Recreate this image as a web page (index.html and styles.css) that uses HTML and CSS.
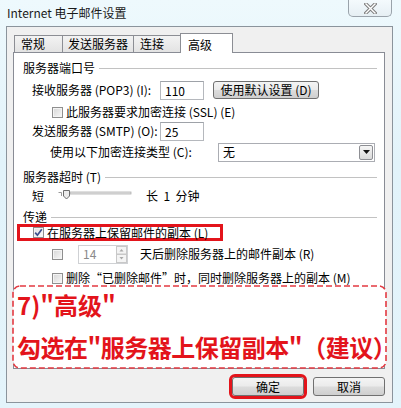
FILE: index.html
```html
<!DOCTYPE html>
<html lang="zh-CN">
<head>
  <meta charset="UTF-8" />
  <title>Internet 电子邮件设置</title>
  <link rel="stylesheet" href="styles.css">
</head>
<body>
  <div class="window">
    <div class="titlebar">
      <span class="title">Internet 电子邮件设置</span>
      <div class="close">
        <svg width="13" height="11" viewBox="0 0 13 11">
          <path d="M2 1 L11 10 M11 1 L2 10" stroke="#7d7d7d" stroke-width="3.4" stroke-linecap="square"/>
          <path d="M2 1 L11 10 M11 1 L2 10" stroke="#ffffff" stroke-width="1.4" stroke-linecap="square"/>
        </svg>
      </div>
    </div>

    <div class="dialog">
      <div class="tabs">
        <div class="tab t1">常规</div>
        <div class="tab t2">发送服务器</div>
        <div class="tab t3">连接</div>
        <div class="tab t4 active">高级</div>
      </div>

      <div class="panel">
        <div class="group g1"><span>服务器端口号</span><i class="rule"></i></div>

        <div class="row r-pop">
          <span class="label">接收服务器 (POP3) (I):</span>
          <span class="field">110</span>
          <span class="btn small">使用默认设置 (D)</span>
        </div>

        <div class="row r-ssl">
          <span class="cb"></span>
          <span>此服务器要求加密连接 (SSL) (E)</span>
        </div>

        <div class="row r-smtp">
          <span class="label">发送服务器 (SMTP) (O):</span>
          <span class="field">25</span>
        </div>

        <div class="row r-enc">
          <span class="label">使用以下加密连接类型 (C):</span>
          <span class="select">
            <span>无</span>
            <span class="drop">
              <svg width="7" height="4" viewBox="0 0 7 4"><path d="M0 0 H7 L3.5 4 Z" fill="#111"/></svg>
            </span>
          </span>
        </div>

        <div class="group g2"><span>服务器超时 (T)</span><i class="rule"></i></div>

        <div class="row r-slider">
          <span>短</span>
          <svg class="slider" width="74" height="12" viewBox="0 0 74 12">
            <path d="M0.5 2.5 H3.5 V6" fill="none" stroke="#9a9a9a"/>
            <rect x="12" y="2" width="61" height="2" fill="#e4e4e4" stroke="#b0b0b0" stroke-width="0.8"/>
            <path d="M5.5 0.5 H11.5 V6 L8.5 9 L5.5 6 Z" fill="#ececec" stroke="#6e6e6e"/>
          </svg>
          <span class="long">长&nbsp;&nbsp;1&nbsp;&nbsp;分钟</span>
        </div>

        <div class="group g3"><span>传递</span><i class="rule"></i></div>

        <div class="row r-keep">
          <span class="cb checked">
            <svg width="9" height="9" viewBox="0 0 9 9"><path d="M1.2 4.6 L3.4 7.2 L7.8 1.2" fill="none" stroke="#3c4f8c" stroke-width="1.7"/></svg>
          </span>
          <span>在服务器上保留邮件的副本 (L)</span>
        </div>

        <div class="row r-days">
          <span class="cb"></span>
          <span class="spin">
            <span>14</span>
            <span class="arrows">
              <svg width="11" height="17" viewBox="0 0 11 17">
                <rect x="0.5" y="0.5" width="10" height="7.5" fill="#f4f4f4" stroke="#c8c8c8"/>
                <rect x="0.5" y="8.5" width="10" height="8" fill="#f4f4f4" stroke="#c8c8c8"/>
                <path d="M3.5 5.5 H7.5 L5.5 3 Z" fill="#a8a8a8"/>
                <path d="M3.5 11 H7.5 L5.5 13.5 Z" fill="#a8a8a8"/>
              </svg>
            </span>
          </span>
          <span class="days-text">天后删除服务器上的邮件副本 (R)</span>
        </div>

        <div class="row r-del">
          <span class="cb"></span>
          <span>删除“已删除邮件”时，同时删除服务器上的副本 (M)</span>
        </div>
      </div>

      <div class="buttons">
        <span class="btn ok">确定</span>
        <span class="btn">取消</span>
      </div>
    </div>

    <!-- tutorial annotation laid over the dialog -->
    <div class="note">
      <svg class="note-border" width="375" height="84" viewBox="0 0 375 84">
        <rect x="1" y="1" width="373" height="82" rx="7" fill="#fff" stroke="#e33a42" stroke-width="1.6" stroke-dasharray="6 3"/>
      </svg>
      <div class="note-l1">7)"高级"</div>
      <div class="note-l2">勾选在"服务器上保留副本"（建议）</div>
    </div>
  </div>
</body>
</html>
```

FILE: styles.css
```css
/* Window frame */
body {
  margin: 0;
  background: #e3f4fb;
  font-family: "Noto Sans CJK SC", "Liberation Sans", sans-serif;
  font-size: 12px;
  color: #000;
}
.window {
  position: relative;
  width: 401px;
  height: 408px;
  overflow: hidden;
  background: linear-gradient(180deg, #eef9fd 0%, #e2f3fa 40%, #e4f4fb 100%);
}
.titlebar {
  height: 26px;
  display: flex;
  align-items: flex-start;
  justify-content: space-between;
  padding: 0 9px 0 7px;
}
.title {
  margin-top: 5px;
  line-height: 16px;
  color: #1a1a1a;
}
.close {
  width: 44px;
  height: 17px;
  box-sizing: border-box;
  border: 1px solid #9aa3ab;
  border-top: none;
  border-radius: 0 0 5px 5px;
  background: linear-gradient(180deg, #f4fafd, #e6eff4);
  display: flex;
  align-items: center;
  justify-content: center;
  padding-top: 1px;
}

/* Dialog body */
.dialog {
  margin-left: 6px;
  width: 387px;
  height: 377px;
  box-sizing: border-box;
  border: 1px solid #8b949c;
  background: #f0f0f0;
  padding: 6px 7px 0 6px;
}
.tabs {
  display: flex;
  align-items: flex-end;
  height: 19px;
  padding-left: 1px;
}
.tab {
  height: 17px;
  box-sizing: border-box;
  border: 1px solid #8c8e94;
  border-bottom: none;
  background: linear-gradient(180deg, #f3f3f3, #e3e3e3);
  padding-left: 6px;
  line-height: 16px;
  margin-left: -1px;
}
.t1 { width: 49px; margin-left: 0; }
.t2 { width: 72px; padding-left: 5px; }
.t3 { width: 48px; }
.t4 { width: 53px; }
.tab.active {
  position: relative;
  z-index: 1;
  height: 20px;
  margin-bottom: -1px;
  background: #fff;
  padding-left: 7px;
  line-height: 22px;
}
.panel {
  width: 372px;
  height: 317px;
  box-sizing: border-box;
  border: 1px solid #898c95;
  background: #fff;
  padding: 0 7px 0 9px;
}

/* Groups and rows */
.group {
  display: flex;
  align-items: center;
  height: 14px;
  line-height: 14px;
}
.rule {
  flex: 1;
  height: 1px;
  background: #c2c2c2;
  margin-left: 4px;
}
.g1 { margin-top: 8px; }
.g2 { margin-top: 8px; }
.g3 { margin-top: 6px; }

.row {
  display: flex;
  align-items: center;
  line-height: 14px;
  white-space: nowrap;
}
.r-pop { height: 20px; margin-top: 5px; padding-left: 9px; }
.r-ssl { height: 16px; margin-top: 4px; padding-left: 29px; }
.r-smtp { height: 20px; margin-top: 1px; padding-left: 9px; }
.r-enc { height: 20px; margin-top: 1px; padding-left: 27px; }
.r-slider { height: 16px; margin-top: 4px; padding-left: 9px; }
.r-keep {
  width: 206px;
  height: 17px;
  box-sizing: border-box;
  margin-left: -6px;
  border: 3px solid #e3141b;
  padding-left: 13px;
}
.r-days { height: 20px; margin-top: 3px; padding-left: 29px; }
.r-del { height: 16px; margin-top: 6px; padding-left: 29px; }

.r-pop .label, .r-smtp .label { width: 128px; }
.r-enc .label { width: 168px; }

.field {
  width: 44px;
  height: 19px;
  box-sizing: border-box;
  border: 1px solid #b5b8bd;
  border-top-color: #9ea2a8;
  padding-left: 4px;
  line-height: 17px;
}
.btn {
  display: inline-flex;
  align-items: center;
  justify-content: center;
  box-sizing: border-box;
  border: 1px solid #707070;
  border-radius: 3px;
  background: linear-gradient(180deg, #f4f4f4 0%, #ebebeb 48%, #dcdcdc 52%, #cfcfcf 100%);
  color: #000;
}
.btn.small {
  width: 106px;
  height: 18px;
  margin-left: 9px;
}
.select {
  display: flex;
  align-items: center;
  justify-content: space-between;
  width: 157px;
  height: 19px;
  box-sizing: border-box;
  border: 1px solid #abadb3;
  padding: 0 1px 0 4px;
}
.drop {
  width: 14px;
  height: 15px;
  box-sizing: border-box;
  border: 1px solid #8e8f94;
  border-radius: 2px;
  background: linear-gradient(180deg, #f6f6f6, #d9d9d9);
  display: flex;
  align-items: center;
  justify-content: center;
}

/* Checkboxes */
.cb {
  width: 11px;
  height: 11px;
  box-sizing: border-box;
  border: 1px solid #8f8f8f;
  background: linear-gradient(135deg, #d6d6d6, #f8f8f8);
  box-shadow: inset 0 0 0 1px #f4f4f4;
  margin-right: 3px;
  flex: none;
  display: flex;
  align-items: center;
  justify-content: center;
}
.cb.checked { background: linear-gradient(135deg, #e2e2e2, #fafafa); }

/* Slider */
.slider { margin-left: 14px; }
.long { margin-left: 14px; }

/* Spin box */
.spin {
  display: flex;
  align-items: center;
  justify-content: space-between;
  width: 50px;
  height: 19px;
  box-sizing: border-box;
  border: 1px solid #cfd1d4;
  margin-left: 12px;
  padding: 0 0 0 4px;
  color: #8a8a8a;
}
.arrows { display: flex; }
.days-text { margin-left: 12px; }

/* Bottom buttons */
.buttons {
  display: flex;
  justify-content: flex-end;
  gap: 9px;
  margin-top: 8px;
}
.buttons .btn {
  width: 72px;
  height: 19px;
}
.btn.ok { outline: 3px solid #e3141b; }

/* Annotation box */
.note {
  position: absolute;
  left: 12px;
  top: 285px;
  width: 375px;
  height: 84px;
  color: #e3141b;
  font-size: 24px;
  font-weight: bold;
  padding: 6px 0 0 5px;
  box-sizing: border-box;
}
.note-border {
  position: absolute;
  left: 0;
  top: 0;
}
.note-l1, .note-l2 {
  position: relative;
  line-height: 28px;
  white-space: nowrap;
}
.note-l2 {
  margin-top: 14px;
  letter-spacing: -0.5px;
}
```
